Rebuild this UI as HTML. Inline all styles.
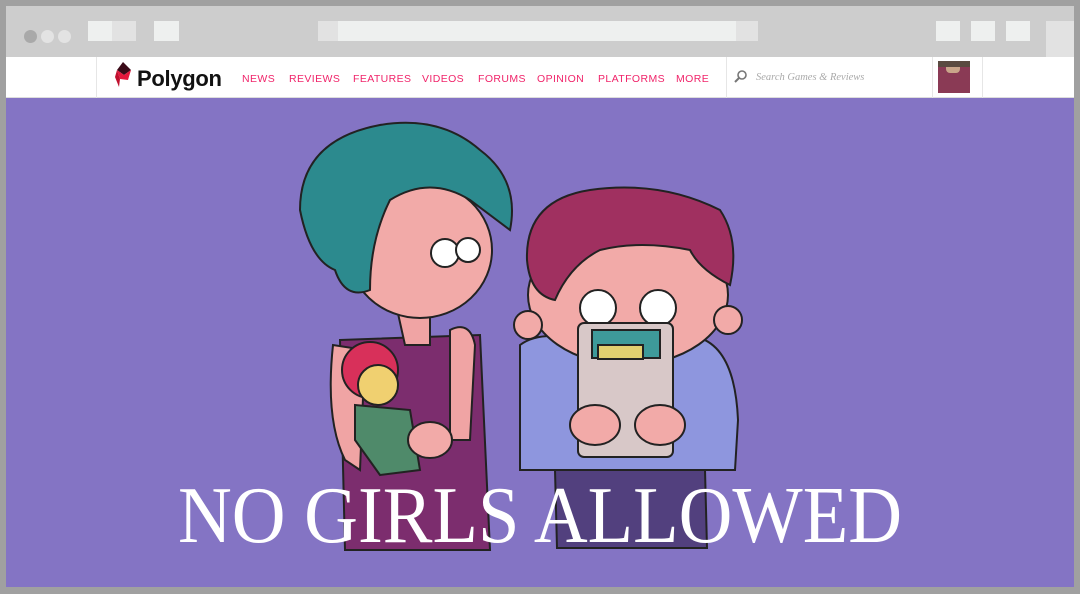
<!DOCTYPE html>
<html><head><meta charset="utf-8"><style>
*{margin:0;padding:0;box-sizing:border-box}
body{width:1080px;height:594px;background:#a0a0a0;position:relative;overflow:hidden;font-family:"Liberation Sans",sans-serif}
.chrome{position:absolute;left:6px;top:6px;width:1068px;height:51px;background:#cdcdcd}
.b{position:absolute;background:#eef0ef}
.dot{position:absolute;width:13px;height:13px;border-radius:50%;top:24px}
.nav{position:absolute;left:6px;top:57px;width:1068px;height:41px;background:#fff;border-bottom:1px solid #ddd}
.nav a{position:absolute;top:16px;font-size:10.5px;color:#f0246a;letter-spacing:.4px;text-decoration:none}
.vl{position:absolute;top:0;width:1px;height:41px;background:#e6e6e6}
.hero{position:absolute;left:6px;top:98px;width:1068px;height:489px;background:#8474c4;overflow:hidden}
</style></head><body>
<div class="chrome">
<div class="dot" style="left:18px;background:#a9a9a9"></div>
<div class="dot" style="left:35px;background:#e3e3e3"></div>
<div class="dot" style="left:52px;background:#e3e3e3"></div>
<div class="b" style="left:82px;top:15px;width:24px;height:20px"></div>
<div class="b" style="left:106px;top:15px;width:24px;height:20px;background:#e2e2e2"></div>
<div class="b" style="left:148px;top:15px;width:25px;height:20px"></div>
<div class="b" style="left:312px;top:15px;width:20px;height:20px;background:#e2e2e2"></div>
<div class="b" style="left:332px;top:15px;width:398px;height:20px"></div>
<div class="b" style="left:730px;top:15px;width:22px;height:20px;background:#e2e2e2"></div>
<div class="b" style="left:930px;top:15px;width:24px;height:20px"></div>
<div class="b" style="left:965px;top:15px;width:24px;height:20px"></div>
<div class="b" style="left:1000px;top:15px;width:24px;height:20px"></div>
<div class="b" style="left:1040px;top:15px;width:28px;height:36px;background:#e2e2e2"></div>
</div>
<div class="nav">
<div class="vl" style="left:90px"></div>
<svg style="position:absolute;left:108px;top:5px" width="20" height="28" viewBox="0 0 20 28"><polygon points="9,0 17,8 10,13 3,8" fill="#3a0a18"/><polygon points="3,8 10,13 17,8 14,18 6,17" fill="#e4173c"/><polygon points="3,8 6,17 5,25 1,15" fill="#c0102e"/></svg>
<div style="position:absolute;left:131px;top:9px;font-size:22px;font-weight:bold;color:#111;letter-spacing:-.3px">Polygon</div>
<a style="left:236px">NEWS</a><a style="left:283px">REVIEWS</a><a style="left:347px">FEATURES</a><a style="left:416px">VIDEOS</a><a style="left:472px">FORUMS</a><a style="left:531px">OPINION</a><a style="left:592px">PLATFORMS</a><a style="left:670px">MORE</a>
<div class="vl" style="left:720px"></div>
<svg style="position:absolute;left:728px;top:13px" width="14" height="14" viewBox="0 0 14 14"><circle cx="8" cy="5" r="4" fill="none" stroke="#777" stroke-width="1.6"/><line x1="5" y1="8" x2="1" y2="12" stroke="#777" stroke-width="2"/></svg>
<div style="position:absolute;left:750px;top:15px;font-family:'Liberation Serif',serif;font-style:italic;font-size:10.5px;color:#aaa">Search Games &amp; Reviews</div>
<div class="vl" style="left:926px"></div>
<div style="position:absolute;left:932px;top:4px;width:32px;height:32px;background:#8a3a55"><div style="position:absolute;left:8px;top:2px;width:14px;height:10px;background:#c9a58a;border-radius:4px"></div><div style="position:absolute;left:0;top:0;width:32px;height:6px;background:#5a4a40"></div></div>
<div class="vl" style="left:976px"></div>
</div>
<div class="hero">
<svg width="1068" height="489" viewBox="6 98 1068 489" style="position:absolute;left:0;top:0">
<g stroke="#222" stroke-width="2">
<path d="M340,340 L480,335 L490,550 L345,550 Z" fill="#7c2d6e"/>
<path d="M333,345 Q325,420 345,460 L360,470 L365,350 Z" fill="#f0a4a4"/>
<path d="M450,330 Q470,320 475,345 L470,440 L450,440 Z" fill="#f0a4a4"/>
<path d="M395,300 L405,345 L430,345 L430,300 Z" fill="#f0a4a4"/>
<ellipse cx="420" cy="250" rx="72" ry="68" fill="#f2aaa8"/>
<path d="M300,210 Q300,140 380,125 Q440,115 480,150 Q520,180 510,230 Q490,215 470,200 Q430,175 390,200 Q370,240 370,290 Q345,300 335,270 Q310,260 300,210 Z" fill="#2c8a8e"/>
<circle cx="445" cy="253" r="14" fill="#fff"/><circle cx="468" cy="250" r="12" fill="#fff"/>
<circle cx="370" cy="370" r="28" fill="#d8305a"/>
<circle cx="378" cy="385" r="20" fill="#f0d070"/>
<path d="M355,405 L410,410 L420,470 L380,475 L355,440 Z" fill="#4f8a6a"/>
<path d="M520,345 Q540,330 580,340 L700,338 Q735,350 738,420 L735,470 L520,470 Z" fill="#8e96de"/>
<path d="M555,470 L705,470 L707,548 L557,548 Z" fill="#52407e"/>
<ellipse cx="628" cy="295" rx="100" ry="70" fill="#f2aaa8"/>
<circle cx="528" cy="325" r="14" fill="#f2aaa8"/><circle cx="728" cy="320" r="14" fill="#f2aaa8"/>
<path d="M527,260 Q525,200 590,190 Q660,180 720,210 Q740,240 730,285 Q700,270 690,250 Q640,240 600,250 Q570,265 555,300 Q530,295 527,260 Z" fill="#a03060"/>
<circle cx="598" cy="308" r="18" fill="#fff"/><circle cx="658" cy="308" r="18" fill="#fff"/>
<rect x="578" y="323" width="95" height="134" rx="6" fill="#d8c8c8"/>
<rect x="592" y="330" width="68" height="28" fill="#3e9a9a"/>
<rect x="598" y="345" width="45" height="14" fill="#e2d070"/>
<ellipse cx="595" cy="425" rx="25" ry="20" fill="#f2aaa8"/>
<ellipse cx="660" cy="425" rx="25" ry="20" fill="#f2aaa8"/>
<ellipse cx="430" cy="440" rx="22" ry="18" fill="#f2aaa8"/>
</g>
<text x="178" y="542" textLength="724" lengthAdjust="spacingAndGlyphs" font-family="Liberation Serif, serif" font-size="80" fill="#fff">NO GIRLS ALLOWED</text>
</svg>
</div>
</body></html>
